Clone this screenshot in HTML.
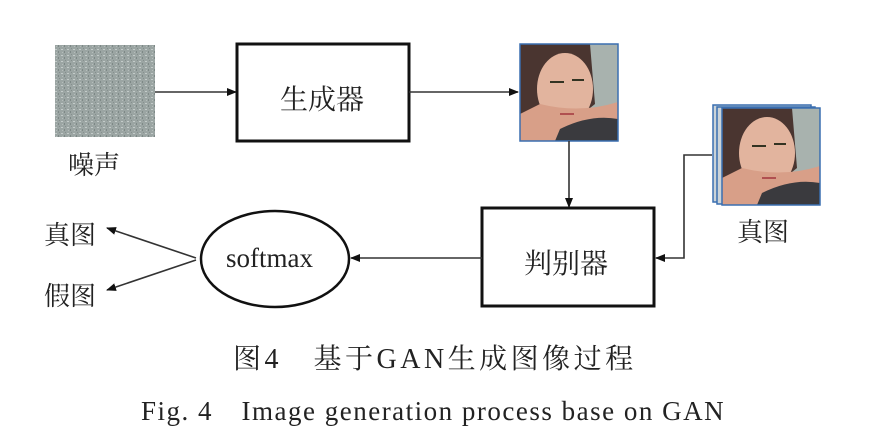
<!DOCTYPE html>
<html><head><meta charset="utf-8"><style>
body{margin:0;background:#fff;width:872px;height:431px;overflow:hidden;position:relative;font-family:"Liberation Serif","Noto Serif CJK SC",serif;color:#222}
.t{position:absolute;white-space:nowrap}
</style></head><body>
<svg width="872" height="431" style="position:absolute;left:0;top:0">
<defs>
<pattern id="nz" width="6" height="6" patternUnits="userSpaceOnUse">
<rect width="6" height="6" fill="#9ba5a3"/><rect x="1" y="1" width="2" height="1" fill="#c3cbc9"/><rect x="4" y="3" width="1" height="2" fill="#7d8886"/><rect x="2" y="4" width="1" height="1" fill="#b5bdbb"/><rect x="5" y="0" width="1" height="1" fill="#858f8d"/>
</pattern>
<marker id="ar" markerWidth="10" markerHeight="8" refX="9" refY="4" orient="auto" markerUnits="userSpaceOnUse"><path d="M0,0 L10,4 L0,8 z" fill="#111"/></marker>
<g id="face">
<rect width="98" height="97" fill="#a8b2ae"/>
<path d="M0,0 H70 L75,60 L50,80 L0,80z" fill="#4a3530"/>
<ellipse cx="45" cy="45" rx="28" ry="36" fill="#e2b49e"/>
<path d="M20,60 Q60,70 98,58 V97 H0 V70z" fill="#d89f88"/>
<path d="M40,85 Q70,70 98,75 V97 H35z" fill="#3a3a3e"/>
<path d="M30,38 h14 M52,36 h12" stroke="#332" stroke-width="2"/>
<path d="M40,70 h14" stroke="#b05050" stroke-width="2"/>
</g>
</defs>
<rect x="55" y="45" width="100" height="92" fill="url(#nz)"/>
<rect x="237" y="44" width="172" height="97" fill="none" stroke="#111" stroke-width="3"/>
<rect x="482" y="208" width="172" height="98" fill="none" stroke="#111" stroke-width="3"/>
<ellipse cx="275" cy="259" rx="74" ry="48" fill="none" stroke="#111" stroke-width="2.5"/>
<use href="#face" x="520" y="44"/>
<rect x="520" y="44" width="98" height="97" fill="none" stroke="#3a6fb0" stroke-width="1.5"/>
<rect x="713" y="105" width="98" height="97" fill="#cbd3d8" stroke="#3a6fb0" stroke-width="1.5"/>
<rect x="717" y="107" width="98" height="97" fill="#cbd3d8" stroke="#3a6fb0" stroke-width="1.5"/>
<use href="#face" x="722" y="108"/>
<rect x="722" y="108" width="98" height="97" fill="none" stroke="#3a6fb0" stroke-width="1.5"/>
<g stroke="#333" stroke-width="1.6" fill="none" marker-end="url(#ar)">
<line x1="155" y1="92" x2="236" y2="92"/>
<line x1="409" y1="92" x2="518" y2="92"/>
<line x1="569" y1="141" x2="569" y2="207"/>
<polyline points="712,155 684,155 684,258 656,258"/>
<line x1="482" y1="258" x2="351" y2="258"/>
<line x1="196" y1="258" x2="107" y2="228"/>
<line x1="196" y1="260" x2="107" y2="290"/>
</g>
</svg>
<div class="t" style="left:280px;top:78px;font-size:28px">生成器</div>
<div class="t" style="left:524px;top:242px;font-size:28px">判别器</div>
<div class="t" style="left:226px;top:243px;font-size:27px">softmax</div>
<div class="t" style="left:68px;top:145px;font-size:26px">噪声</div>
<div class="t" style="left:737px;top:212px;font-size:26px">真图</div>
<div class="t" style="left:44px;top:215px;font-size:26px">真图</div>
<div class="t" style="left:44px;top:276px;font-size:26px">假图</div>
<div class="t" style="left:233px;top:337px;font-size:28px;letter-spacing:3.5px">图4　基于GAN生成图像过程</div>
<div class="t" style="left:141px;top:389px;font-size:27px;letter-spacing:1.5px">Fig. 4　Image generation process base on GAN</div>
</body></html>
